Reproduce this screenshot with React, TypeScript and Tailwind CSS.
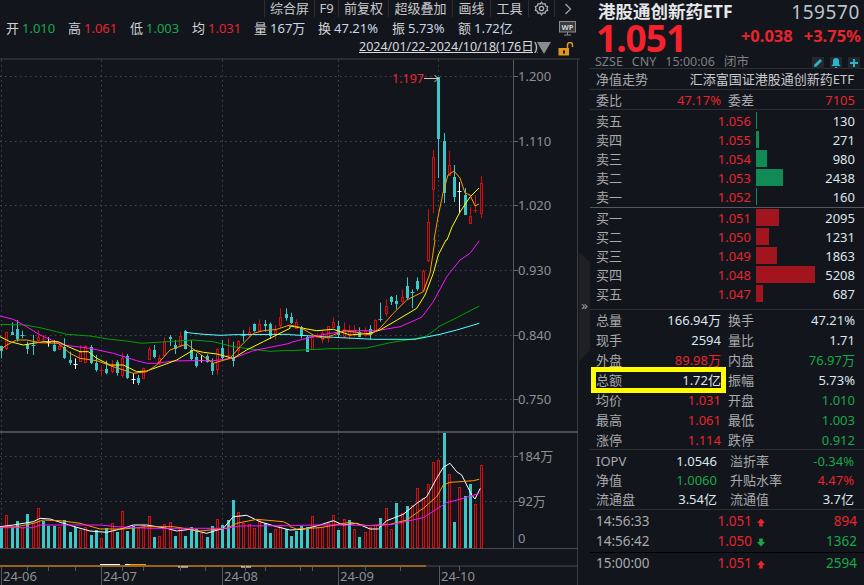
type Candle = [number, number, number, number, string];

// candles in screen pixels: wick top, body top, body bottom, wick bottom, kind
const z7 = (a: number, b: number, c: number, d: number, k: string): Candle => [290 + a / 3, 290 + b / 3, 290 + c / 3, 290 + d / 3, k];
const z8 = (a: number, b: number, c: number, d: number, k: string): Candle => [240 + a / 3, 240 + b / 3, 240 + c / 3, 240 + d / 3, k];

const candles: Candle[] = [
  z7(168, 168, 183, 205, 'c'), z7(125, 127, 175, 180, 'r'), z7(97, 125, 135, 135, 'c'), z7(90, 118, 148, 155, 'c'),
  z7(122, 135, 140, 145, 'c'), z7(155, 163, 177, 192, 'c'), z7(135, 165, 167, 195, 'c'), z7(120, 140, 150, 155, 'r'),
  z7(135, 148, 152, 155, 'r'), z7(142, 155, 157, 170, 'w'), z7(150, 165, 182, 185, 'c'), z7(160, 168, 177, 178, 'r'),
  z7(145, 170, 203, 207, 'c'), z7(185, 210, 218, 225, 'c'), z7(205, 221, 223, 237, 'w'), z7(165, 187, 213, 215, 'r'),
  z7(165, 167, 215, 217, 'r'), z7(165, 170, 217, 222, 'c'), z7(195, 220, 240, 245, 'c'), z7(230, 240, 242, 255, 'r'),
  z7(212, 237, 249, 253, 'c'), z7(210, 225, 243, 250, 'r'), z7(210, 217, 250, 257, 'c'), z7(187, 203, 255, 263, 'r'),
  z7(192, 197, 263, 267, 'c'), z7(250, 268, 270, 282, 'w'), z7(255, 263, 277, 285, 'c'), z7(233, 235, 265, 267, 'r'),
  z7(170, 178, 207, 207, 'r'), z7(165, 180, 200, 205, 'c'), z7(195, 203, 218, 225, 'r'), z7(142, 155, 195, 200, 'r'),
  z7(135, 142, 148, 168, 'c'), z7(150, 165, 178, 192, 'c'), z7(125, 138, 165, 170, 'r'), z7(120, 123, 177, 178, 'c'),
  z7(150, 180, 207, 210, 'c'), z7(190, 202, 230, 233, 'c'), z7(195, 210, 212, 218, 'w'), z7(193, 197, 215, 218, 'c'),
  z7(205, 218, 243, 255, 'c'), z7(175, 178, 238, 255, 'r'), z7(150, 175, 205, 210, 'c'), z7(145, 195, 197, 205, 'r'),
  z7(155, 205, 215, 230, 'c'), z7(150, 152, 180, 195, 'r'), z7(120, 135, 137, 155, 'c'), z7(110, 125, 135, 142, 'r'),
  z7(100, 102, 123, 125, 'c'), z7(88, 103, 122, 125, 'r'), z7(90, 102, 108, 125, 'c'), z7(97, 103, 140, 147, 'c'),
  z7(105, 120, 130, 150, 'r'), z7(55, 82, 107, 115, 'r'), z7(55, 72, 85, 92, 'c'),
  z8(218, 230, 248, 252, 'c'), z8(238, 245, 262, 262, 'r'), z8(258, 262, 288, 295, 'c'), z8(287, 290, 335, 335, 'c'),
  z8(285, 290, 327, 328, 'r'), z8(280, 285, 292, 295, 'r'), z8(268, 280, 298, 310, 'r'), z8(258, 258, 295, 308, 'r'),
  z8(232, 247, 263, 265, 'r'), z8(243, 258, 285, 292, 'c'), z8(247, 268, 290, 295, 'r'), z8(255, 272, 285, 298, 'r'),
  z8(255, 270, 283, 290, 'r'), z8(262, 275, 290, 292, 'c'), z8(262, 272, 283, 290, 'r'), z8(255, 268, 285, 298, 'c'),
  z8(238, 240, 270, 275, 'r'), z8(188, 238, 243, 245, 'c'), z8(178, 198, 220, 230, 'r'), z8(168, 172, 188, 195, 'c'),
  z8(165, 182, 192, 208, 'c'), z8(148, 172, 185, 190, 'r'), z8(112, 138, 175, 178, 'c'), z8(148, 155, 158, 205, 'c'),
  z8(112, 124, 148, 152, 'c'), z8(88, 92, 148, 150, 'r'),
  [209, 222, 260, 262, 'r'], [150, 157, 189, 213, 'r'], [77, 77, 139, 178, 'c'], [133, 141, 193, 203, 'c'],
  [151, 165, 175, 175, 'r'], [165, 177, 197, 202, 'c'], [182, 191, 192, 213, 'w'], [188, 195, 215, 215, 'c'],
  [207, 216, 223, 223, 'r'], [195, 210, 211, 213, 'r'], [176, 183, 213, 218, 'r'],
];

const vols: [number, string][] = [
  [288, 'c'], [256, 'r'], [290, 'c'], [273, 'c'], [293, 'r'], [252, 'c'], [280, 'r'], [235, 'r'], [272, 'c'], [288, 'c'], [287, 'c'],
  [292, 'r'], [270, 'c'], [305, 'c'], [290, 'c'], [300, 'r'], [292, 'r'], [315, 'c'], [300, 'c'], [325, 'r'], [295, 'c'], [280, 'r'],
  [305, 'c'], [243, 'r'], [302, 'c'], [287, 'c'], [295, 'r'], [285, 'r'], [258, 'r'], [320, 'c'], [318, 'r'], [282, 'r'], [276, 'r'],
  [318, 'c'], [292, 'r'], [318, 'c'], [291, 'c'], [298, 'c'], [310, 'r'], [320, 'c'], [288, 'c'], [267, 'r'], [285, 'c'], [270, 'c'],
  [210, 'c'], [247, 'r'], [280, 'r'], [282, 'r'], [295, 'r'], [270, 'r'], [280, 'c'], [308, 'c'], [297, 'r'], [285, 'r'], [298, 'c'],
  [318, 'c'], [302, 'c'], [288, 'c'], [292, 'c'], [258, 'r'], [290, 'r'], [292, 'r'], [280, 'r'], [255, 'r'], [300, 'c'], [268, 'r'],
  [270, 'c'], [298, 'r'], [320, 'c'], [306, 'r'], [290, 'r'], [286, 'r'], [264, 'c'], [235, 'r'], [298, 'r'], [219, 'c'], [250, 'r'],
  [228, 'c'], [226, 'r'], [175, 'r'], [204, 'r'], [162, 'r'], [96, 'r'], [90, 'r'], [8, 'c'], [133, 'r'], [276, 'c'], [172, 'r'],
  [198, 'c'], [162, 'c'], [222, 'r'], [105, 'r'],
];

const CYAN = '#3cc8c8';
const RED = '#d80c0c';
const cx = (i: number) => Math.round(1 + i * 5.27) + 0.5;

// helpers turning zoom-crop readings into chart coordinates
const a = (pts: number[][]) => pts.map(([x, y]) => `${(x / 3).toFixed(1)},${(290 + y / 3).toFixed(1)}`).join(' ');
const b = (pts: number[][]) => pts.map(([x, y]) => `${(290 + x / 3).toFixed(1)},${(240 + y / 3).toFixed(1)}`).join(' ');
const v1 = (pts: number[][]) => pts.map(([x, y]) => `${(x / 3).toFixed(1)},${(430 + y / 3).toFixed(1)}`).join(' ');
const v2 = (pts: number[][]) => pts.map(([x, y]) => `${(290 + x / 3).toFixed(1)},${(430 + y / 3).toFixed(1)}`).join(' ');

const lines = [
  { color: '#00a000', pts: a([[0, 103], [75, 105], [120, 113], [170, 125], [200, 133], [270, 138], [330, 148], [380, 153], [425, 160], [500, 155], [580, 150], [640, 155], [700, 170], [760, 178], [810, 184], [870, 181]]) + ' ' + b([[0, 332], [120, 326], [230, 324], [300, 308], [375, 296], [410, 288], [450, 258], [500, 233], [568, 198]]) },
  { color: '#55ffff', pts: a([[555, 127], [580, 130], [612, 133], [660, 136], [705, 134], [870, 133]]) + ' ' + b([[0, 284], [50, 287], [130, 292], [250, 298], [375, 298], [410, 291], [450, 283], [500, 270], [568, 250]]) },
  { color: '#ff10ff', pts: a([[0, 78], [40, 88], [80, 110], [120, 135], [190, 165], [270, 175], [340, 190], [410, 212], [440, 220], [470, 220], [520, 213], [570, 212], [640, 212], [700, 205], [760, 182], [810, 172], [870, 160]]) + ' ' + b([[0, 308], [50, 295], [110, 282], [170, 272], [260, 272], [330, 260], [395, 232], [430, 185], [470, 110], [510, 60], [540, 40], [568, 2]]) },
  { color: '#ffff00', pts: a([[0, 140], [30, 155], [70, 165], [100, 160], [130, 155], [175, 155], [205, 170], [240, 185], [265, 185], [290, 205], [330, 225], [370, 225], [410, 245], [440, 243], [490, 225], [530, 210], [580, 180], [610, 187], [650, 192], [700, 205], [740, 180], [790, 155], [840, 130], [870, 115]]) + ' ' + b([[0, 258], [40, 265], [80, 272], [130, 268], [180, 285], [240, 280], [270, 270], [330, 235], [380, 205], [405, 165], [430, 100], [445, 45], [468, 0]]) + ' 447,240 452,227 460,212 470,197 479,188' },
  { color: '#ff9900', pts: a([[0, 180], [20, 165], [50, 150], [80, 150], [120, 158], [175, 160], [210, 190], [240, 205], [290, 212], [340, 230], [400, 250], [440, 245], [470, 225], [510, 180], [560, 162], [590, 185], [640, 220], [690, 205], [720, 170], [760, 130], [790, 122], [830, 118], [870, 105]]) + ' ' + b([[0, 255], [30, 262], [70, 285], [100, 295], [130, 285], [160, 272], [210, 278], [240, 285], [270, 265], [310, 220], [350, 180], [400, 155], [420, 100], [435, 0]]) + ' 434,240 438,217 443,193 448,175 454,171 460,178 465,193 470,195 475,206 479,204' },
];

const volLines = [
  { color: '#ffffff', pts: v1([[0, 290], [40, 285], [100, 275], [120, 265], [150, 267], [190, 280], [230, 292], [270, 303], [320, 307], [370, 295], [400, 285], [440, 285], [500, 295], [530, 303], [570, 298], [620, 310], [670, 295], [700, 260], [740, 256], [780, 275], [830, 290], [870, 300]]) + ' ' + v2([[0, 300], [40, 298], [90, 285], [130, 272], [160, 285], [200, 280], [240, 297], [265, 297], [290, 272], [340, 253], [380, 220], [410, 200], [440, 145], [460, 112], [480, 100], [500, 125], [515, 135], [545, 195], [555, 207], [571, 175]]) },
  { color: '#ff9900', pts: v1([[0, 292], [50, 290], [100, 280], [130, 270], [180, 272], [240, 280], [300, 297], [370, 297], [440, 290], [520, 290], [600, 303], [680, 295], [710, 280], [770, 268], [850, 275], [870, 285]]) + ' ' + v2([[0, 290], [20, 297], [90, 293], [180, 277], [230, 287], [300, 283], [350, 270], [400, 235], [440, 200], [460, 165], [480, 157], [510, 155], [550, 152], [568, 148]]) },
  { color: '#ff10ff', pts: v1([[0, 293], [100, 293], [120, 285], [180, 285], [300, 285], [350, 290], [450, 295], [680, 295], [720, 288], [870, 287]]) + ' ' + v2([[0, 287], [70, 285], [130, 285], [170, 285], [250, 287], [310, 283], [400, 263], [470, 218], [520, 205], [568, 190]]) },
];

const priceTicks = [
  { y: 76, label: '1.200' }, { y: 141, label: '1.110' }, { y: 205, label: '1.020' },
  { y: 270, label: '0.930' }, { y: 335, label: '0.840' }, { y: 399, label: '0.750' },
];
const gridX = [1, 101, 222, 338, 438];
const months = [{ x: 3, t: '24-06' }, { x: 103, t: '24-07' }, { x: 224, t: '24-08' }, { x: 340, t: '24-09' }, { x: 441, t: '24-10' }];
const minorTicks = [27, 48, 75, 122, 143, 180, 205, 245, 265, 300, 312, 365, 400, 459];

function Chart() {
  return (
    <svg viewBox="0 60 580 525" width={580} height={525} className="block" style={{ fontFamily: '"Noto Sans", sans-serif' }}>
      {priceTicks.map((t) => (
        <g key={t.y}>
          <line x1={0} x2={513} y1={t.y + 0.5} y2={t.y + 0.5} stroke="#44474c" strokeDasharray="1.5 3.5" />
          <line x1={513} x2={518} y1={t.y + 0.5} y2={t.y + 0.5} stroke="#6a6a6a" />
          <text x={518} y={t.y + 4.5} fontSize={13} fill="#8e9092">{t.label}</text>
        </g>
      ))}
      {gridX.map((x) => (
        <g key={x}>
          <line x1={x + 0.5} x2={x + 0.5} y1={60} y2={431} stroke="#44474c" strokeDasharray="1.5 3.5" />
          <line x1={x + 0.5} x2={x + 0.5} y1={433} y2={547} stroke="#44474c" strokeDasharray="1.5 3.5" />
        </g>
      ))}
      {[456, 501].map((y) => (
        <g key={y}>
          <line x1={0} x2={513} y1={y + 0.5} y2={y + 0.5} stroke="#44474c" strokeDasharray="1.5 3.5" />
          <line x1={513} x2={518} y1={y + 0.5} y2={y + 0.5} stroke="#6a6a6a" />
        </g>
      ))}
      {candles.map(([top, bt, bb, bottom, kind], i) => {
        const x = cx(i);
        const color = kind === 'c' ? CYAN : kind === 'w' ? '#ffffff' : RED;
        const thin = bb - bt < 2;
        return (
          <g key={i}>
            <line x1={x} x2={x} y1={top} y2={bottom} stroke={color} />
            {thin ? (
              <line x1={x - 2} x2={x + 2} y1={Math.round(bt) + 0.5} y2={Math.round(bt) + 0.5} stroke={color} />
            ) : kind === 'c' ? (
              <rect x={x - 1.5} y={Math.round(bt)} width={3} height={Math.round(bb - bt)} fill={color} />
            ) : (
              <rect x={x - 1} y={Math.round(bt) + 0.5} width={2} height={Math.round(bb - bt)} fill="#12151b" stroke={color} />
            )}
          </g>
        );
      })}
      {lines.map((l) => (
        <polyline key={l.color} points={l.pts} fill="none" stroke={l.color} strokeWidth={1} />
      ))}
      <text x={392} y={83} fontSize={12.5} fill="#e8242e">1.197</text>
      <path d="M424 78.500H438M434.500 75l3.500 3.500-3.500 3.500" fill="none" stroke="#c8c8c8" />
      {vols.map(([top, kind], i) => {
        const x = cx(i);
        const y = Math.round(430 + top / 3);
        return kind === 'c' ? (
          <rect key={i} x={x - 1.5} y={y} width={3} height={548 - y} fill={CYAN} />
        ) : (
          <rect key={i} x={x - 1} y={y + 0.5} width={2} height={547 - y} fill="#12151b" stroke={RED} />
        );
      })}
      {volLines.map((l) => (
        <polyline key={l.color} points={l.pts} fill="none" stroke={l.color} strokeWidth={1} />
      ))}
      {/* pane frames */}
      <line x1={513.5} x2={513.5} y1={60} y2={548} stroke="#55585c" />
      <line x1={577.5} x2={577.5} y1={60} y2={585} stroke="#3a3c40" />
      <line x1={0} x2={578} y1={432} y2={432} stroke="#4a4c50" strokeWidth={2} />
      <line x1={0} x2={578} y1={548.5} y2={548.5} stroke="#4a4c50" />
      <line x1={0} x2={578} y1={566} y2={566} stroke="#4a4c50" />
      <line x1={0} x2={426} y1={566} y2={566} stroke="#ff9900" />
      <line x1={100} x2={120} y1={564.5} y2={564.5} stroke="#ffffff" />
      <line x1={125} x2={130} y1={564.5} y2={564.5} stroke="#ffffff" />
      <line x1={130} x2={146} y1={564.5} y2={564.5} stroke="#ff9900" />
      <line x1={178} x2={188} y1={567} y2={567} stroke="#ffffff" />
      <line x1={241} x2={251} y1={567} y2={567} stroke="#ffffff" />
      {minorTicks.map((x) => (
        <line key={x} x1={x + 0.5} x2={x + 0.5} y1={566} y2={571} stroke="#55585c" />
      ))}
      {months.map((m) => (
        <g key={m.t}>
          <line x1={m.x - 2 + 0.5} x2={m.x - 2 + 0.5} y1={566} y2={585} stroke="#55585c" />
          <text x={m.x} y={581} fontSize={13} fill="#8e9092">{m.t}</text>
        </g>
      ))}
      <text x={518} y={461} fontSize={13} fill="#8e9092" style={{ fontFamily: '"Noto Sans", "Noto Sans CJK SC", sans-serif' }}>184万</text>
      <text x={518} y={506} fontSize={13} fill="#8e9092" style={{ fontFamily: '"Noto Sans", "Noto Sans CJK SC", sans-serif' }}>92万</text>
      <text x={518} y={543} fontSize={13} fill="#8e9092">0</text>
    </svg>
  );
}

function Tab({ children, className = '' }: { children: React.ReactNode; className?: string }) {
  return <div className={`flex h-full items-center justify-center border-l border-[#2b2d32] text-[#c8cacc] ${className}`}>{children}</div>;
}

const quote = [
  { k: '开', v: '1.010', c: 'text-[#18a84a]', w: 'w-[62px]' },
  { k: '高', v: '1.061', c: 'text-[#e8242e]', w: 'w-[62px]' },
  { k: '低', v: '1.003', c: 'text-[#18a84a]', w: 'w-[62px]' },
  { k: '均', v: '1.031', c: 'text-[#e8242e]', w: 'w-[62px]' },
  { k: '量', v: '167万', c: 'text-[#c8d8e8]', w: 'w-[64px]' },
  { k: '换', v: '47.21%', c: 'text-[#c8d8e8]', w: 'w-[74px]' },
  { k: '振', v: '5.73%', c: 'text-[#c8d8e8]', w: 'w-[66px]' },
  { k: '额', v: '1.72亿', c: 'text-[#c8d8e8]', w: 'w-[60px]' },
];

function LeftPane() {
  return (
    <div className="w-[580px] shrink-0">
      <div className="h-[60px] border-b-2 border-[#2b2d32]">
        <div className="flex h-[17px] justify-end text-[13px] leading-none">
          <Tab className="w-[50px]">综合屏</Tab>
          <Tab className="w-[24px]">F9</Tab>
          <Tab className="w-[50px]">前复权</Tab>
          <Tab className="w-[64px]">超级叠加</Tab>
          <Tab className="w-[38px]">画线</Tab>
          <Tab className="w-[38px]">工具</Tab>
          <Tab className="w-[26px]">
            <svg width="15" height="15" viewBox="0 0 24 24" fill="none" stroke="#b0b2b4" strokeWidth="2">
              <circle cx="12" cy="12" r="3.500" />
              <path d="M12 2l2 3 3.500-.8 1 3.400 3.300 1.400-1 3 1 3-3.300 1.400-1 3.400L14 19l-2 3-2-3-3.500.8-1-3.400L2.200 15l1-3-1-3 3.300-1.400 1-3.400L10 5z" />
            </svg>
          </Tab>
          <div className="flex h-full w-[26px] items-center justify-center border-l border-[#2b2d32]">
            <svg width="8" height="12" viewBox="0 0 8 12" fill="none" stroke="#a8aaac" strokeWidth="1.200">
              <path d="M1.500 1l5 5-5 5" />
            </svg>
          </div>
        </div>
        <div className="relative flex h-[22px] items-center pl-[6px] text-[13px] leading-none">
          {quote.map((q) => (
            <div key={q.k} className={`flex shrink-0 gap-[3px] ${q.w}`}>
              <span className="text-[#d0d2d4]">{q.k}</span>
              <span className={q.c}>{q.v}</span>
            </div>
          ))}
          <svg className="absolute left-[559px] top-[4px]" width="17" height="15" viewBox="0 0 17 15" fill="none">
            <rect x="0.500" y="0.500" width="16" height="10.500" fill="#3a3c40" stroke="#8a8c8e" />
            <path d="M5 14h7M8.500 11v3" stroke="#8a8c8e" />
            <text x="8.500" y="9" textAnchor="middle" fontSize="7.500" fontWeight="700" fill="#d0d2d4">WP</text>
          </svg>
        </div>
        <div className="relative flex h-[17px] items-center pl-[359px]">
          <span className="text-[12.500px] leading-none text-[#d8dade] underline">2024/01/22-2024/10/18(176日)</span>
          <svg className="absolute left-[537px] top-[3px]" width="14" height="12" viewBox="0 0 14 12">
            <path d="M0 0h14L7 12z" fill="#8a8c8e" />
          </svg>
          <svg className="absolute left-[558px] top-[3px]" width="16" height="14" viewBox="0 0 16 14" fill="none">
            <path d="M9.500 6V3a2.500 2.500 0 0 1 5 0V5" stroke="#e0961a" strokeWidth="1.500" />
            <rect x="0.500" y="6" width="10.500" height="7.500" fill="#e0961a" />
            <rect x="5" y="8.500" width="2" height="3" fill="#12151b" />
          </svg>
        </div>
      </div>
      <Chart />
    </div>
  );
}

function Rule({ className = 'border-[#2e3034]' }: { className?: string }) {
  return <div className={`h-0 border-t ${className}`} />;
}

const book = [
  { l: '卖五', p: '1.056', q: 130, w: 1 }, { l: '卖四', p: '1.055', q: 271, w: 3 }, { l: '卖三', p: '1.054', q: 980, w: 11 },
  { l: '卖二', p: '1.053', q: 2438, w: 27 }, { l: '卖一', p: '1.052', q: 160, w: 1 },
];
const bids = [
  { l: '买一', p: '1.051', q: 2095, w: 23 }, { l: '买二', p: '1.050', q: 1231, w: 13 }, { l: '买三', p: '1.049', q: 1863, w: 21 },
  { l: '买四', p: '1.048', q: 5208, w: 59 }, { l: '买五', p: '1.047', q: 687, w: 7 },
];

function BookRow({ l, p, q, w, color }: { l: string; p: string; q: number; w: number; color: string }) {
  return (
    <div className="flex h-[19px] items-center pl-[6px] pr-[9px]">
      <span className="mt-[2px] w-[60px] text-[#a8aaac]">{l}</span>
      <span className="mt-[2px] w-[95px] text-right text-[#e8242e]">{p}</span>
      <span className="ml-[5px] h-[17px]" style={{ width: w, backgroundColor: color }} />
      <span className="mt-[2px] flex-1 text-right text-[#dde6ee]">{q}</span>
    </div>
  );
}

const RED_T = 'text-[#e8242e]';
const GREEN_T = 'text-[#18a84a]';
const WHITE_T = 'text-[#dde6ee]';
const stats = [
  ['总量', '166.94万', WHITE_T, '换手', '47.21%', WHITE_T],
  ['现手', '2594', WHITE_T, '量比', '1.71', WHITE_T],
  ['外盘', '89.98万', RED_T, '内盘', '76.97万', GREEN_T],
  ['总额', '1.72亿', WHITE_T, '振幅', '5.73%', WHITE_T],
  ['均价', '1.031', RED_T, '开盘', '1.010', GREEN_T],
  ['最高', '1.061', RED_T, '最低', '1.003', GREEN_T],
  ['涨停', '1.114', RED_T, '跌停', '0.912', GREEN_T],
];
const funds = [
  ['IOPV', '1.0546', WHITE_T, '溢折率', '-0.34%', GREEN_T],
  ['净值', '1.0060', GREEN_T, '升贴水率', '4.47%', RED_T],
  ['流通盘', '3.54亿', WHITE_T, '流通值', '3.7亿', WHITE_T],
];

function Arrow({ up }: { up: boolean }) {
  return (
    <svg width="8" height="9" viewBox="0 0 9 9" className="ml-[5px] shrink-0">
      {up ? <path d="M4.500 0L9 5H6.500v4h-4V5H0z" fill="#e8242e" /> : <path d="M4.500 9L9 4H6.500V0h-4v4H0z" fill="#18a84a" />}
    </svg>
  );
}

function Trade({ t, p, up, q, c }: { t: string; p: string; up: boolean; q: string; c: string }) {
  return (
    <div className="flex h-[20px] items-center pl-[6px] pr-[7px]">
      <span className="w-[70px] text-[#a8aaac]">{t}</span>
      <span className="w-[86px] text-right text-[#e8242e]">{p}</span>
      <Arrow up={up} />
      <span className={`flex-1 text-right ${c}`}>{q}</span>
    </div>
  );
}

function RightPane() {
  return (
    <div className="relative h-[585px] w-[274px] shrink-0 overflow-hidden text-[13px] leading-none">
      <div className="h-[68px] pl-[8px] pr-[4px]">
        <div className="flex h-[24px] items-center justify-between">
          <span className="text-[17.500px] font-bold text-[#e4e6e8]">港股通创新药ETF</span>
          <span className="text-[19px] tracking-[0.6px] text-[#b8c4ce]">159570</span>
        </div>
        <div className="-mt-[1px] flex h-[30px] items-center justify-between">
          <span className="-ml-[2px] text-[37px] font-bold leading-[30px] tracking-[-1px] text-[#f5222d]">1.051</span>
          <span className="-mr-[1px] flex gap-[11px] pb-[3px] text-[16.500px] font-bold text-[#e8242e]">
            <span>+0.038</span>
            <span>+3.75%</span>
          </span>
        </div>
        <div className="mt-[3px] flex h-[13px] items-center justify-between">
          <span className="-ml-[3px] flex gap-[9px] text-[12.500px] text-[#7e8082]">
            <span>SZSE</span>
            <span>CNY</span>
            <span>15:00:06</span>
            <span>闭市</span>
          </span>
          <span className="flex gap-[6px]">
            <span className="flex h-[12px] w-[12px] items-center justify-center bg-[#22282e]">
              <svg width="10" height="10" viewBox="0 0 10 10"><path d="M1 9l.5-2.500L7 1l2 2-5.500 5.500z" fill="#29b6c6" /></svg>
            </span>
            <span className="flex h-[12px] w-[12px] items-center justify-center bg-[#22282e]">
              <svg width="10" height="10" viewBox="0 0 10 10"><path d="M5 0a3 3 0 0 1 3 3v3l1.500 2h-9L2 6V3a3 3 0 0 1 3-3zM4 9h2v1H4z" fill="#29b6c6" /></svg>
            </span>
            <span className="flex h-[12px] w-[12px] items-center justify-center bg-[#22282e]">
              <svg width="10" height="10" viewBox="0 0 10 10"><path d="M4 1h2v3h3v2H6v3H4V6H1V4h3z" fill="#29b6c6" /></svg>
            </span>
          </span>
        </div>
      </div>
      <Rule />
      <div className="flex h-[20px] items-center justify-between pl-[6px] pr-[10px]">
        <span className="text-[#a8aaac]">净值走势</span>
        <span className="text-[#c8cacc]">汇添富国证港股通创新药ETF</span>
      </div>
      <Rule />
      <div className="flex h-[19px] items-center pl-[6px] pr-[9px] pt-[2px]">
        <span className="w-[60px] text-[#a8aaac]">委比</span>
        <span className="w-[65px] text-right text-[#e8242e]">47.17%</span>
        <span className="ml-[7px] text-[#a8aaac]">委差</span>
        <span className="flex-1 text-right text-[#e8242e]">7105</span>
      </div>
      <Rule />
      <div className="pb-[1px] pt-[1px]">
        {book.map((r) => <BookRow key={r.l} {...r} color="#128a55" />)}
      </div>
      <Rule className="border-[#55585c]" />
      <div>
        {bids.map((r) => <BookRow key={r.l} {...r} color="#a2151e" />)}
      </div>
      <Rule className="mt-[6px] border-[#2e3034]" />
      <div>
        {stats.map(([a1, a2, a3, b1, b2, b3]) => (
          <div key={a1} className="flex h-[20px] items-center pl-[6px] pr-[9px]">
            <span className="w-[40px] text-[#a8aaac]">{a1}</span>
            <span className={`w-[85px] text-right ${a3}`}>{a2}</span>
            <span className="ml-[7px] text-[#a8aaac]">{b1}</span>
            <span className={`flex-1 text-right ${b3}`}>{b2}</span>
          </div>
        ))}
      </div>
      <Rule className="-mt-[1px] border-[#2e3034]" />
      <div className="pt-[2px]">
        {funds.map(([a1, a2, a3, b1, b2, b3]) => (
          <div key={a1} className="flex h-[19px] items-center pl-[6px] pr-[10px]">
            <span className="w-[45px] text-[#a8aaac]">{a1}</span>
            <span className={`w-[76px] text-right ${a3}`}>{a2}</span>
            <span className="ml-[13px] text-[#a8aaac]">{b1}</span>
            <span className={`flex-1 text-right ${b3}`}>{b2}</span>
          </div>
        ))}
      </div>
      <Rule />
      <div className="pt-[2px] text-[13.500px]">
        <Trade t="14:56:33" p="1.051" up q="894" c={RED_T} />
        <Trade t="14:56:42" p="1.050" up={false} q="1362" c={GREEN_T} />
      </div>
      <div className="border-t border-black pt-[1px] text-[13.500px]">
        <Trade t="15:00:00" p="1.051" up q="2594" c={GREEN_T} />
      </div>
      {/* annotation box around the 总额 cell */}
      <div className="absolute left-[1px] top-[367px] h-[26px] w-[135px] border-[5px] border-[#ffff00]" />
    </div>
  );
}

export default function App() {
  return (
    <div
      className="flex h-[585px] w-[864px] overflow-hidden bg-[#12151b]"
      style={{ fontFamily: '"Noto Sans", "Noto Sans CJK SC", sans-serif' }}
    >
      <LeftPane />
      <div className="w-[10px] shrink-0">
        <div className="-ml-[1px] mt-[252px] flex h-[110px] w-[11px] items-center justify-center bg-[#1f1f25] pb-[3px] text-[13px] leading-none text-[#a0a2a4] [clip-path:polygon(0_0,100%_9%,100%_89%,0_100%)]">»</div>
      </div>
      <RightPane />
    </div>
  );
}
